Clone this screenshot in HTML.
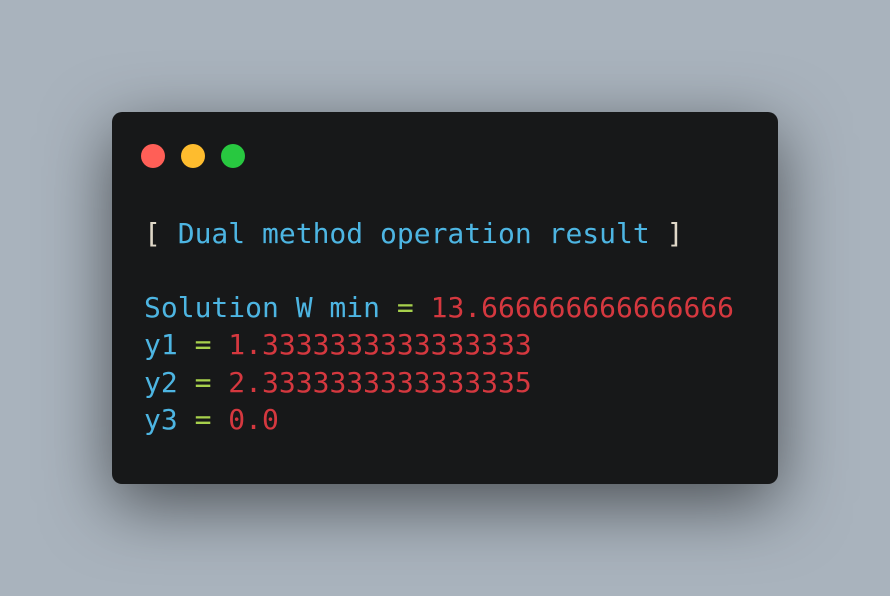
<!DOCTYPE html>
<html><head><style>
html,body{margin:0;padding:0;width:890px;height:596px;overflow:hidden;background:#a9b3bd;}
.card{position:absolute;left:112px;top:112px;width:666px;height:372px;background:#171819;border-radius:10px;box-shadow:0 20px 68px rgba(0,0,0,0.55);}
.dot{position:absolute;top:32px;width:24px;height:24px;border-radius:50%;}
pre{position:absolute;left:32px;margin:0;font-family:"DejaVu Sans Mono","Liberation Mono",monospace;font-size:28px;line-height:37.3px;color:#4db5e2;}
.r{color:#d5383f}.g{color:#a7d04c}.w{color:#e0d8c8}
</style></head><body>
<div class="card">
<div class="dot" style="left:29px;background:#ff5f57"></div>
<div class="dot" style="left:69px;background:#febc2e"></div>
<div class="dot" style="left:109px;background:#28c840"></div>
<pre style="top:103px"><span class="w">[</span> Dual method operation result <span class="w">]</span></pre>
<pre style="top:177px">Solution W min <span class="g">=</span> <span class="r">13.666666666666666</span>
y1 <span class="g">=</span> <span class="r">1.3333333333333333</span>
y2 <span class="g">=</span> <span class="r">2.3333333333333335</span>
y3 <span class="g">=</span> <span class="r">0.0</span></pre>
</div>
</body></html>
